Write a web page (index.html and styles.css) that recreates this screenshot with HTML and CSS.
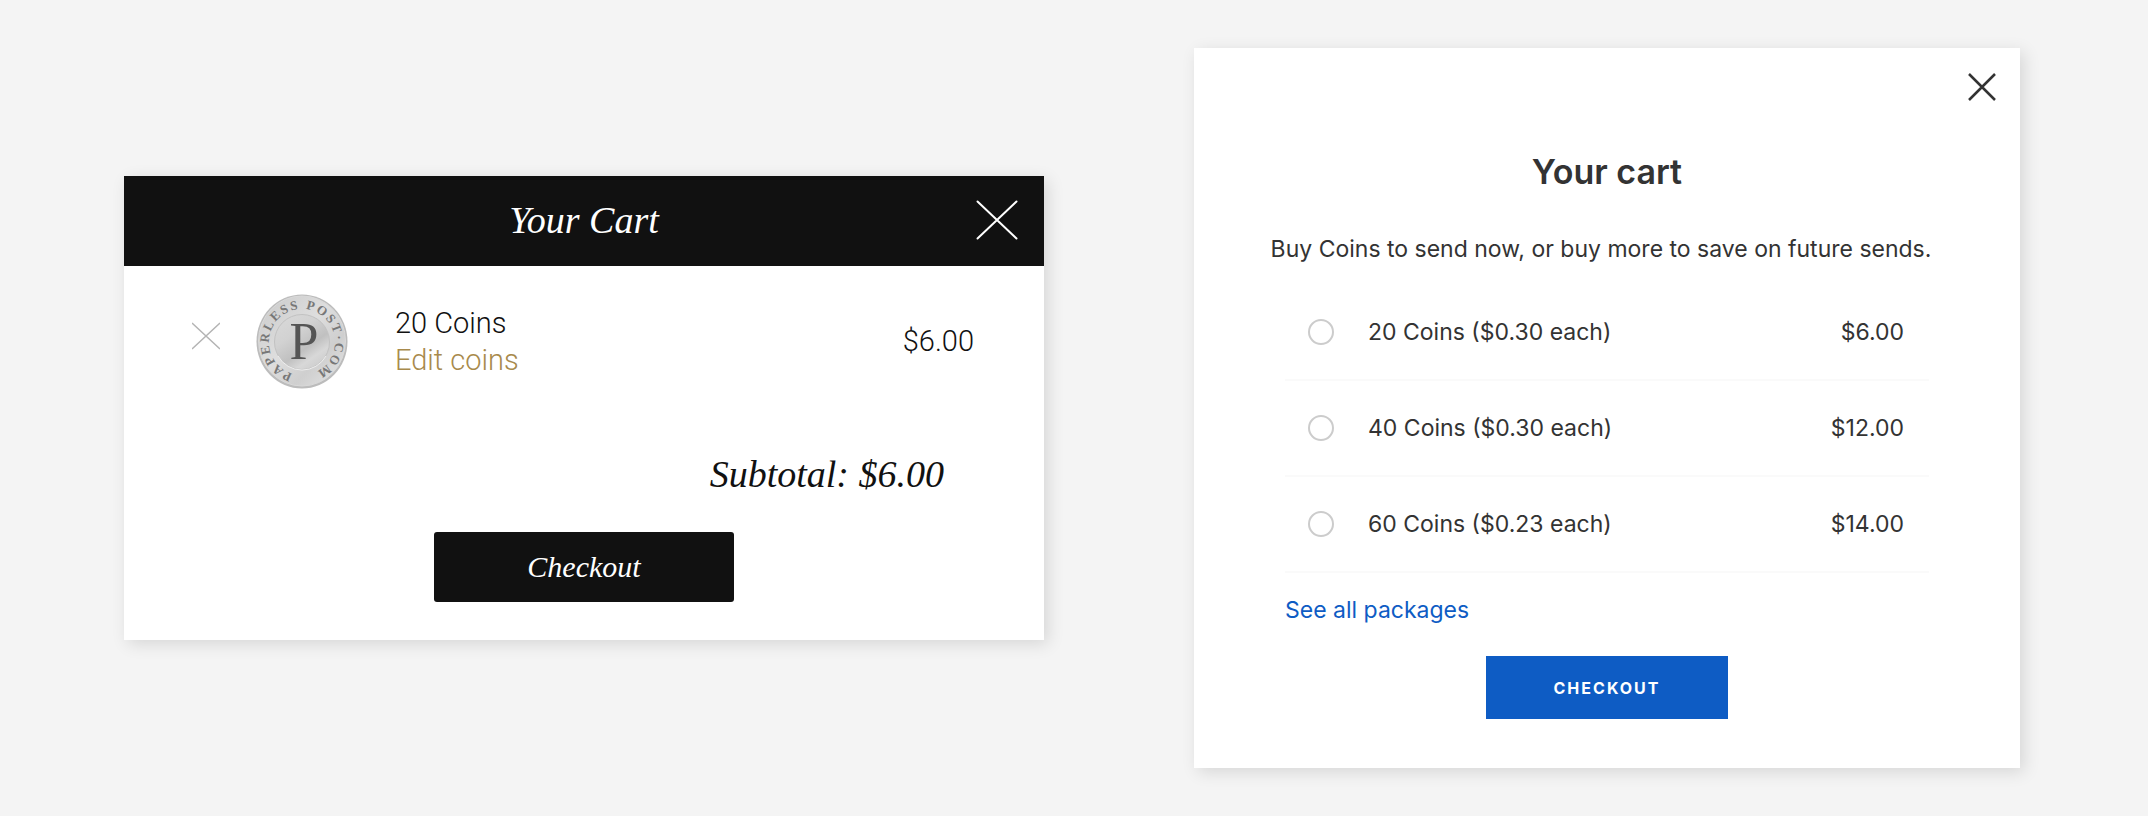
FILE: index.html
```html
<!DOCTYPE html>
<html lang="en">
<head>
<meta charset="utf-8">
<meta name="viewport" content="width=device-width, initial-scale=1">
<title>Your cart</title>
<link rel="stylesheet" href="styles.css">
</head>
<body>
<main class="stage">
  <section class="card classic" aria-labelledby="classic-title">
    <header class="classic-head">
      <h2 class="classic-title" id="classic-title">Your Cart</h2>
      <button class="icon-button" type="button" aria-label="Close">
        <svg width="42" height="40" viewBox="0 0 42 40" fill="none" stroke="#fff" stroke-width="2" stroke-linecap="round"><path d="M1.5 1.5l39 37M40.500 1.500l-39 37"/></svg>
      </button>
    </header>
    <div class="item">
      <button class="icon-button remove" type="button" aria-label="Remove item">
        <svg width="28" height="28" viewBox="0 0 28 28" fill="none" stroke="#b4b4b4" stroke-width="1.500"><path d="M0 1l28 26M28 1L0 27"/></svg>
      </button>
      <svg class="coin" width="92" height="95" viewBox="0 0 92 95" role="img" aria-label="Coin">
        <defs>
          <linearGradient id="rim" x1="0" y1="0" x2="1" y2="1">
            <stop offset="0" stop-color="#c9c9c9"/>
            <stop offset=".45" stop-color="#dedede"/>
            <stop offset=".7" stop-color="#cfcfcf"/>
            <stop offset="1" stop-color="#e6e6e6"/>
          </linearGradient>
          <linearGradient id="face" x1="0" y1="0" x2=".7" y2="1">
            <stop offset="0" stop-color="#dadada"/>
            <stop offset=".4" stop-color="#d2d2d2"/>
            <stop offset=".68" stop-color="#c0c0c0"/>
            <stop offset=".85" stop-color="#d8d8d8"/>
            <stop offset="1" stop-color="#cecece"/>
          </linearGradient>
          <path id="ring" d="M36.500 79.600A33 33 0 1 1 58 78.700"/>
        </defs>
        <ellipse cx="46" cy="47.500" rx="45.500" ry="47" fill="#bcbcbc"/>
        <ellipse cx="46" cy="47" rx="43.500" ry="45" fill="url(#rim)" stroke="#d9d9d9"/>
        <circle cx="46" cy="48" r="27.500" fill="url(#face)" stroke="#c2c2c2"/>
        <path d="M22 62A27.500 27.500 0 0 0 70 62" fill="none" stroke="#eee"/>
        <text class="coin-ring"><textPath href="#ring">PAPERLESS POST·COM</textPath></text>
        <text class="coin-letter" x="48" y="65" text-anchor="middle">P</text>
      </svg>
      <div class="item-text">
        <span>20 Coins</span>
        <a class="edit" href="#">Edit coins</a>
      </div>
      <span class="item-price">$6.00</span>
    </div>
    <p class="subtotal">Subtotal: $6.00</p>
    <button class="classic-checkout" type="button">Checkout</button>
  </section>

  <section class="card modern" aria-labelledby="modern-title">
    <button class="icon-button modern-close" type="button" aria-label="Close">
      <svg width="28" height="28" viewBox="0 0 28 28" fill="none" stroke="#333" stroke-width="2.500"><path d="M1 1l26 26M27 1L1 27"/></svg>
    </button>
    <h2 class="modern-title" id="modern-title">Your cart</h2>
    <p class="lead">Buy Coins to send now, or buy more to save on future sends.</p>
    <form class="packages">
      <label class="package"><input class="radio" type="radio" name="package"><span>20 Coins ($0.30 each)</span><span class="package-price">$6.00</span></label>
      <label class="package"><input class="radio" type="radio" name="package"><span>40 Coins ($0.30 each)</span><span class="package-price">$12.00</span></label>
      <label class="package"><input class="radio" type="radio" name="package"><span>60 Coins ($0.23 each)</span><span class="package-price">$14.00</span></label>
      <a class="see-all" href="#">See all packages</a>
      <button class="modern-checkout" type="button">CHECKOUT</button>
    </form>
  </section>
</main>
</body>
</html>
```

FILE: styles.css
```css
* { box-sizing: border-box; }

body {
  margin: 0;
  background: #f4f4f4;
}

h2, p { margin: 0; font-weight: 400; }
a { text-decoration: none; }
svg { display: block; }
button { border: 0; cursor: pointer; }

.stage {
  min-height: 100vh;
  padding: 48px 128px 48px 124px;
  display: grid;
  grid-template-columns: 920fr 826fr;
  gap: 150px;
  align-items: center;
}

.card {
  background: #fff;
  box-shadow: 4px 4px 16px rgba(0, 0, 0, .12);
  display: flex;
  flex-direction: column;
}

.icon-button { padding: 0; background: none; }

/* Classic cart */
.classic {
  padding-bottom: 38px;
  color: #111;
  font-family: "Liberation Serif", serif;
}

.classic-head {
  height: 90px;
  padding: 0 26px 3px;
  background: #111;
  color: #fff;
  display: grid;
  grid-template-columns: 1fr auto 1fr;
  align-items: center;
}

.classic-title {
  grid-column: 2;
  font-size: 38px;
  line-height: 40px;
  font-style: italic;
}

.classic-head .icon-button { justify-self: end; }

.item {
  padding: 28px 70px 0 68px;
  display: flex;
  align-items: center;
  font-family: Roboto, "Liberation Sans", sans-serif;
  font-size: 29px;
  font-weight: 300;
  line-height: 37px;
}

.remove {
  margin-top: 28px;
  align-self: flex-start;
}

.coin { margin-left: 36px; }

.coin-ring {
  font: 700 13px "Liberation Serif", serif;
  letter-spacing: 2px;
  fill: #777;
}

.coin-letter {
  font: 52px "Liberation Serif", serif;
  fill: #555;
}

.item-text {
  margin-left: 47px;
  flex: 1;
  display: flex;
  flex-direction: column;
}

.edit { color: #a88a4c; }

.subtotal {
  padding: 62px 100px 0 0;
  text-align: right;
  font-size: 38px;
  line-height: 46px;
  font-style: italic;
}

.classic-checkout {
  width: 300px;
  height: 70px;
  margin-top: 35px;
  align-self: center;
  border-radius: 3px;
  background: #111;
  color: #fff;
  font: italic 30px "Liberation Serif", serif;
}

/* Modern cart */
.modern {
  padding: 25px 24px 49px;
  color: #333;
  font-family: Inter, sans-serif;
}

.modern-close { align-self: flex-end; }

.modern-title {
  margin-top: 48px;
  text-align: center;
  font-size: 34px;
  font-weight: 600;
  line-height: 46px;
}

.lead {
  margin-top: 37px;
  padding-right: 12px;
  text-align: center;
  font-size: 23px;
  line-height: 34px;
}

.packages {
  margin-top: 19px;
  padding: 0 67px;
  display: flex;
  flex-direction: column;
  font-size: 23px;
  line-height: 34px;
}

.package {
  height: 96px;
  padding: 0 25px 0 23px;
  border-bottom: 2px solid #fafafa;
  display: flex;
  align-items: center;
}

.radio {
  appearance: none;
  width: 26px;
  height: 26px;
  margin: 0 34px 0 0;
  border: 2px solid #ccc;
  border-radius: 50%;
}

.package-price { margin-left: auto; }

.see-all {
  margin-top: 20px;
  align-self: flex-start;
  color: #0e5cc4;
}

.modern-checkout {
  width: 242px;
  height: 63px;
  margin-top: 29px;
  align-self: center;
  background: #0e5cc4;
  color: #fff;
  font: 700 16px Inter, sans-serif;
  letter-spacing: 2px;
}
```
